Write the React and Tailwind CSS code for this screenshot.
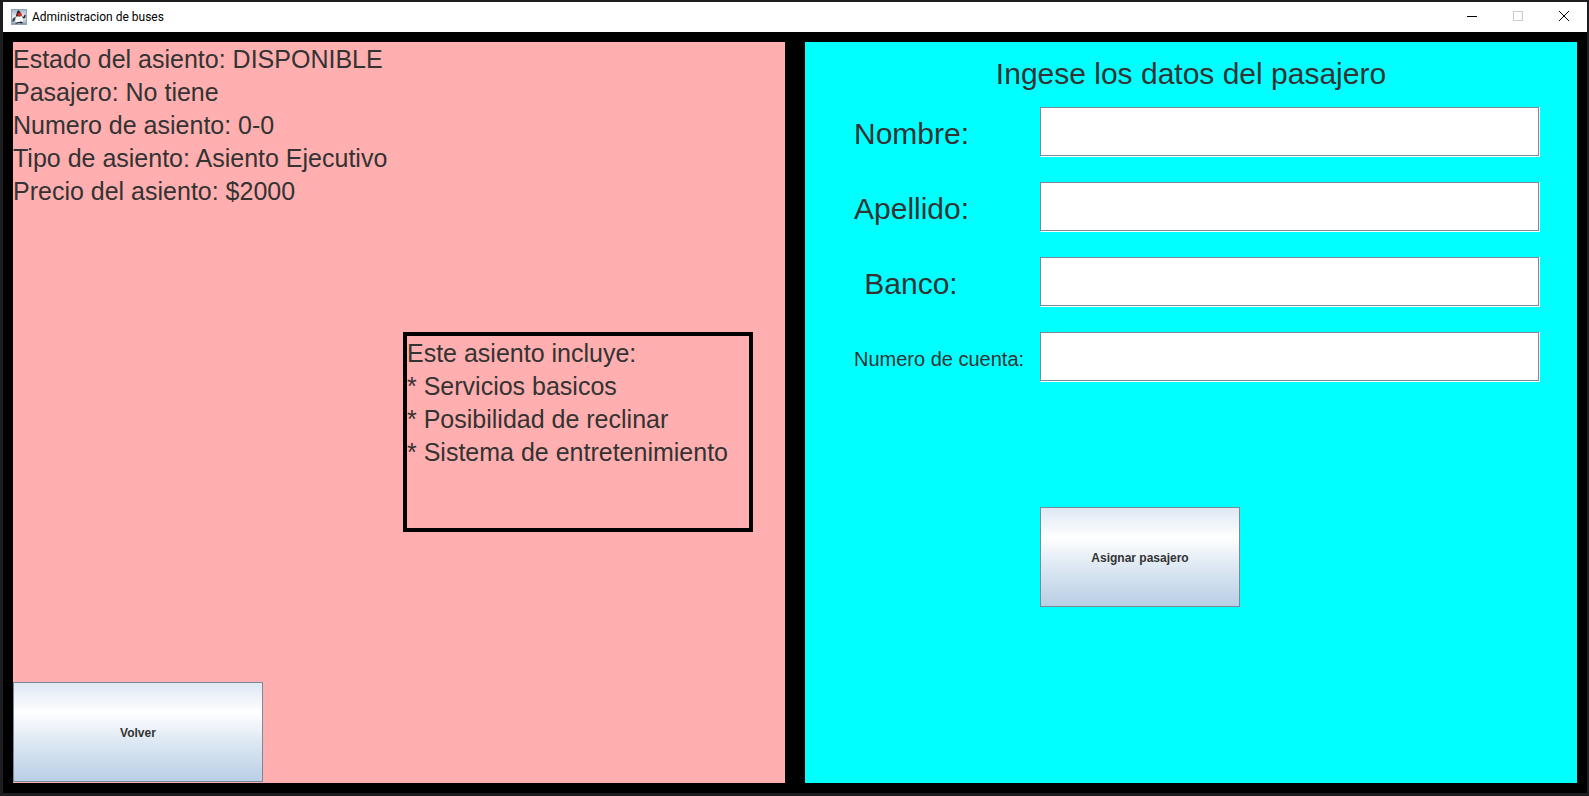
const seatInfo = [
  'Estado del asiento: DISPONIBLE',
  'Pasajero: No tiene',
  'Numero de asiento: 0-0',
  'Tipo de asiento: Asiento Ejecutivo',
  'Precio del asiento: $2000',
];

const services = ['Servicios basicos', 'Posibilidad de reclinar', 'Sistema de entretenimiento'];

const fields = [
  { id: 'nombre', label: 'Nombre:', style: 'w-[114px] text-center text-3xl' },
  { id: 'apellido', label: 'Apellido:', style: 'w-[114px] text-center text-3xl' },
  { id: 'banco', label: 'Banco:', style: 'w-[114px] text-center text-3xl' },
  { id: 'cuenta', label: 'Numero de cuenta:', style: 'text-xl' },
];

function JavaIcon() {
  return (
    <svg viewBox="0 0 16 16" className="size-4" aria-hidden="true">
      <defs>
        <linearGradient id="tile" x1="0" y1="0" x2="0" y2="1">
          <stop offset="0" stopColor="#9fb3c6" />
          <stop offset="0.45" stopColor="#e6ebf0" />
          <stop offset="0.8" stopColor="#b9c8d6" />
          <stop offset="1" stopColor="#7590aa" />
        </linearGradient>
      </defs>
      <rect x="0.5" y="0.5" width="15" height="15" fill="url(#tile)" stroke="#93a5b7" />
      <path d="M7.2 1.2 C8.8 2 10.2 4 10.8 7.2 L5 7.8 C5.2 5 6 2.6 7.2 1.2 Z" fill="#1b1d20" />
      <path d="M5 7.6 L2 9.4 L1 12.4 L2.6 12.6 L4.4 10.8 Z" fill="#3a3d40" />
      <path d="M10.8 7.2 L12.8 7.8 L13.6 5.4 L14.8 6.2 L14.2 9 L12 9.6 Z" fill="#26292c" />
      <path d="M4.9 7.8 L10.9 7.2 C12 9.4 12.4 11.6 12 13.6 L10.2 12.8 L7.8 13.2 L5 14 C4.2 12 4.2 10 4.9 7.8 Z" fill="#fbfbfb" />
      <path d="M4.2 13.8 L7.8 12.9 L10.2 12.6 L12.2 13.8 L10.4 14.4 L8.6 13.8 L5 14.8 Z" fill="#222426" />
      <circle cx="8.5" cy="5.6" r="2.1" fill="#d92a20" />
    </svg>
  );
}

function WindowButton({ label, color, children }) {
  return (
    <button type="button" aria-label={label} className={`flex h-7 w-[46px] items-center justify-center pb-[2px] ${color}`}>
      <svg viewBox="0 0 10 10" className="size-[10px]" fill="none" stroke="currentColor" shapeRendering="crispEdges">
        {children}
      </svg>
    </button>
  );
}

function MetalButton({ size, children }) {
  return (
    <button
      type="button"
      className={`${size} h-[100px] border border-[#7a8a99] bg-[linear-gradient(#dde8f3_0%,#ffffff_30%,#dde8f3_60%,#b8cfe5_100%)] pt-[2px] text-xs font-bold text-[#333333]`}
    >
      {children}
    </button>
  );
}

export default function App() {
  return (
    <div className="flex min-h-screen flex-col bg-[#1e1e20] pt-[2px] pr-[2px] pb-[3px] pl-[3px] font-['Liberation_Sans',Arial,sans-serif] text-[#333333]">
      <header className="flex h-[30px] items-center bg-white pl-2">
        <JavaIcon />
        <h1 className="flex-1 pl-[5px] font-[Roboto,'Noto_Sans',sans-serif] text-xs text-black">Administracion de buses</h1>
        <WindowButton label="Minimizar" color="text-black">
          <path d="M0 5.5H10" />
        </WindowButton>
        <WindowButton label="Maximizar" color="text-[#cccccc]">
          <path d="M0.5 0.5H9.5V9.5H0.5Z" />
        </WindowButton>
        <WindowButton label="Cerrar" color="text-black">
          <path d="M0 0L10 10M10 0L0 10" shapeRendering="auto" />
        </WindowButton>
      </header>

      <main className="grid flex-1 grid-cols-2 gap-5 bg-black p-[10px]">
        <section className="flex flex-col bg-[#ffafaf] pb-px text-[25px] leading-[33px]">
          <div className="pt-px">
            {seatInfo.map((line) => (
              <p key={line}>{line}</p>
            ))}
          </div>
          <div className="mt-[124px] mr-8 h-[200px] w-[350px] self-end border-4 border-black pt-px">
            <p>Este asiento incluye:</p>
            <ul>
              {services.map((service) => (
                <li key={service}>* {service}</li>
              ))}
            </ul>
          </div>
          <div className="mt-auto flex">
            <MetalButton size="w-[250px]">Volver</MetalButton>
          </div>
        </section>

        <section className="bg-[#00ffff] pr-[37px] pl-[49px]">
          <h2 className="-ml-3 pt-[14px] text-center text-3xl">Ingese los datos del pasajero</h2>
          <form className="mt-[15px]">
            <div className="flex flex-col gap-[25px]">
              {fields.map((field) => (
                <div key={field.id} className="flex items-center">
                  <div className="flex w-[186px] shrink-0 pt-[3px]">
                    <label htmlFor={field.id} className={`whitespace-nowrap ${field.style}`}>
                      {field.label}
                    </label>
                  </div>
                  <div className="min-w-0 flex-1 border-r border-b border-white">
                    <input
                      id={field.id}
                      type="text"
                      className="block h-[49px] w-full border border-[#7a8a99] bg-white px-1 text-xl outline-none"
                    />
                  </div>
                </div>
              ))}
            </div>
            <div className="mt-[125px] flex pl-[186px]">
              <MetalButton size="w-[200px]">Asignar pasajero</MetalButton>
            </div>
          </form>
        </section>
      </main>
    </div>
  );
}
